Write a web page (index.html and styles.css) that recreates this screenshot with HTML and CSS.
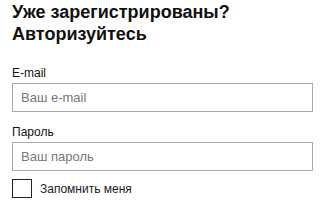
FILE: index.html
```html
<!DOCTYPE html>
<html>
<head>
  <title>Вход</title>
  <meta name="viewport" content="width=device-width, initial-scale=1.0">
  <link rel="stylesheet" href="styles.css">
</head>
<body>
  <form class="login">
    <h2 class="login-title">Уже зарегистрированы?<br>Авторизуйтесь</h2>

    <label class="field-label" for="email">E-mail</label>
    <input class="field-input" id="email" type="text" placeholder="Ваш e-mail">

    <label class="field-label field-label-gap" for="password">Пароль</label>
    <input class="field-input" id="password" type="password" placeholder="Ваш пароль">

    <label class="remember">
      <span class="remember-box"></span>
      <span class="remember-text">Запомнить меня</span>
    </label>
  </form>
</body>
</html>
```

FILE: styles.css
```css
html, body {
  margin: 0;
  padding: 0;
  background: #fff;
  font-family: "Liberation Sans", Arial, sans-serif;
  color: #111;
}

.login {
  display: flex;
  flex-direction: column;
  padding: 1px 14px 0 12px;
}

.login-title {
  margin: 0 0 21px;
  font-size: 18px;
  line-height: 22px;
  font-weight: bold;
  color: #111;
}

.field-label {
  font-size: 12px;
  line-height: 14px;
  margin-bottom: 3px;
}

.field-label-gap {
  margin-top: 13px;
}

.field-input {
  box-sizing: border-box;
  width: 301px;
  height: 29px;
  margin: 0;
  padding: 0 8px;
  border: 1px solid #aaa;
  border-radius: 0;
  font-family: inherit;
  font-size: 13px;
  color: #333;
  outline: none;
}

.field-input::placeholder {
  color: #777;
}

.remember {
  display: flex;
  align-items: center;
  gap: 8px;
  margin-top: 8px;
}

.remember-box {
  box-sizing: border-box;
  width: 20px;
  height: 19px;
  border: 1px solid #222;
  background: #fff;
}

.remember-text {
  font-size: 12px;
  color: #222;
}
```
